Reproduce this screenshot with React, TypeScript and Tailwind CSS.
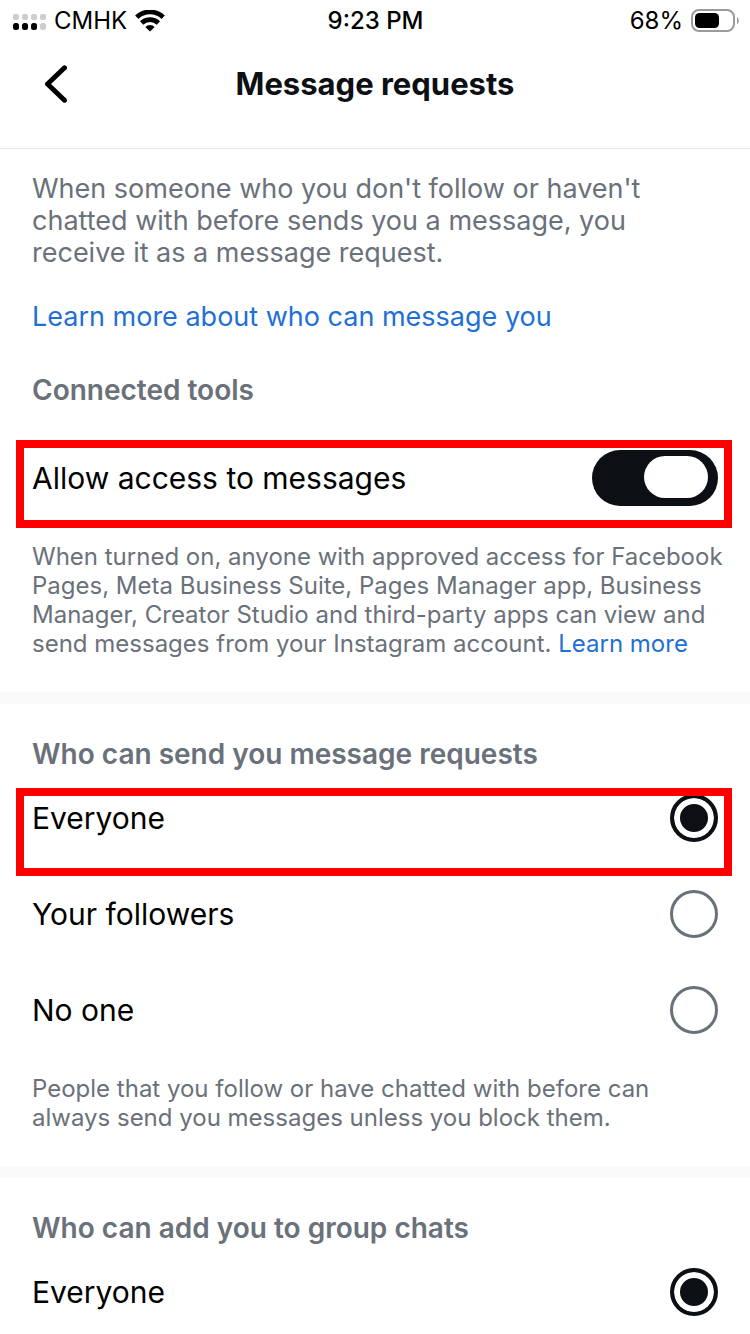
import { useState, type ReactNode } from 'react';

const audienceOptions = ['Everyone', 'Your followers', 'No one'];
const groupOptions = ['Everyone'];

function StatusBar() {
  return (
    <div className="grid grid-cols-3 items-center h-10 pt-px pl-3 pr-[11px] text-2xl text-black shrink-0">
      <div className="flex items-center">
        <svg viewBox="0 0 34 17" className="w-[34px] h-[17px] mt-1 mr-2" aria-hidden="true">
          {[0, 1, 2, 3].map((i) => (
            <g key={i}>
              <rect x={1 + i * 9} y="0" width="6" height="6" rx="2" fill="#cdcdcd" />
              <rect x={1 + i * 9} y="9" width="6" height="7" rx="2.5" fill={i < 3 ? '#000' : '#cdcdcd'} />
            </g>
          ))}
        </svg>
        <span>CMHK</span>
        <svg viewBox="0 0 30 22" className="w-[30px] h-[22px] ml-2" fill="none" stroke="#000" aria-hidden="true">
          <path d="M1.8 7.3a19 19 0 0 1 26.4 0" strokeWidth="4.8" />
          <path d="M6.6 12.9a12.2 12.2 0 0 1 16.8 0" strokeWidth="4.8" />
          <path d="M15 21.5l-4.7-4.6a6.6 6.600 0 0 1 9.400 0z" fill="#000" stroke="none" />
        </svg>
      </div>
      <span className="text-center font-medium whitespace-nowrap">9:23 PM</span>
      <div className="flex items-center justify-end gap-2">
        <span>68%</span>
        <svg viewBox="0 0 48 24" className="w-12 h-6" aria-hidden="true">
          <rect x="1" y="1" width="42" height="21" rx="7" fill="none" stroke="#9b9b9b" strokeWidth="2" />
          <rect x="4" y="4" width="24" height="15" rx="4.5" fill="#000" />
          <path d="M46 8c2.4 1.2 2.4 6 0 7.2z" fill="#9b9b9b" />
        </svg>
      </div>
    </div>
  );
}

function Header() {
  return (
    <header className="grid grid-cols-[1fr_auto_1fr] items-start h-[109px] px-8 pt-5 border-b border-[#e6e8ec] shrink-0">
      <button aria-label="Back" className="flex items-center justify-center w-12 h-12">
        <svg viewBox="0 0 24 40" className="w-6 h-10" fill="none" stroke="#000" strokeWidth="5" strokeLinecap="round" strokeLinejoin="round">
          <path d="M20.5 3.8L3.5 20l17 16.2" />
        </svg>
      </button>
      <h1 className="text-[31px] leading-[48px] font-bold text-[#0c1014]">Message requests</h1>
    </header>
  );
}

function SectionTitle({ children }: { children: ReactNode }) {
  return <h2 className="px-8 text-[28px] leading-8 font-semibold text-[#6a717a]">{children}</h2>;
}

function Footnote({ children }: { children: ReactNode }) {
  return <p className="pl-8 pr-6 text-[24px] leading-[29px] text-[#6a717a]">{children}</p>;
}

function Divider() {
  return <div className="h-3 bg-[#fafafa]" />;
}

interface RadioListProps {
  name: string;
  options: string[];
  highlighted?: string;
}

function RadioList({ name, options, highlighted }: RadioListProps) {
  const [selected, setSelected] = useState(options[0]);

  return (
    <div>
      {options.map((option) => (
        <label key={option} className="relative flex items-center justify-between h-24 px-8 cursor-pointer">
          <span className="text-[30px] leading-10 text-black">{option}</span>
          <input
            type="radio"
            name={name}
            checked={selected === option}
            onChange={() => setSelected(option)}
            className="appearance-none w-12 h-12 rounded-full border-3 border-[#6a717a] bg-white checked:border-4 checked:border-[#0c1014] checked:bg-[#0c1014] checked:shadow-[inset_0_0_0_6px_#fff]"
          />
          {option === highlighted && (
            <span className="absolute z-10 left-4 right-[18px] top-[18px] h-[88px] border-8 border-[#ff0000] pointer-events-none" />
          )}
        </label>
      ))}
    </div>
  );
}

export default function App() {
  const [allowAccess, setAllowAccess] = useState(true);

  return (
    <div className="flex flex-col h-screen bg-white font-['Inter',sans-serif]">
      <StatusBar />
      <Header />

      <main className="flex-1 overflow-y-auto [scrollbar-width:none]">
        <section className="pt-6 pb-[34px]">
          <p className="px-8 text-[27px] leading-8 text-[#6a717a]">
            When someone who you don't follow or haven't chatted with before sends you a message, you receive it as a message request.
          </p>
          <a href="#" className="block mt-8 px-8 text-[27px] leading-8 text-[#1f6fd6]">
            Learn more about who can message you
          </a>

          <div className="mt-[41px]">
            <SectionTitle>Connected tools</SectionTitle>
          </div>
          <label className="relative flex items-center justify-between h-24 mt-6 px-8 cursor-pointer">
            <span className="text-[30px] leading-10 text-black">Allow access to messages</span>
            <span className="relative flex">
              <input
                type="checkbox"
                role="switch"
                checked={allowAccess}
                onChange={(e) => setAllowAccess(e.target.checked)}
                className="peer appearance-none w-[126px] h-14 rounded-full bg-[#c7ccd1] checked:bg-[#0c1014]"
              />
              <span className="absolute top-[6px] left-[10px] peer-checked:left-[52px] w-16 h-[42px] rounded-full bg-white pointer-events-none" />
            </span>
            <span className="absolute z-10 left-4 right-[18px] top-[10px] h-[88px] border-8 border-[#ff0000] pointer-events-none" />
          </label>
          <div className="mt-4">
            <Footnote>
              When turned on, anyone with approved access for Facebook Pages, Meta Business Suite, Pages Manager app, Business Manager, Creator Studio and third-party apps can view and send messages from your Instagram account.{' '}
              <a href="#" className="text-[#1f6fd6]">Learn more</a>
            </Footnote>
          </div>
        </section>

        <Divider />

        <section className="pt-[34px] pb-[34px]">
          <SectionTitle>Who can send you message requests</SectionTitle>
          <RadioList name="requests" options={audienceOptions} highlighted="Everyone" />
          <div className="mt-4">
            <Footnote>
              People that you follow or have chatted with before can always send you messages unless you block them.
            </Footnote>
          </div>
        </section>

        <Divider />

        <section className="pt-[34px]">
          <SectionTitle>Who can add you to group chats</SectionTitle>
          <RadioList name="groups" options={groupOptions} />
        </section>
      </main>
    </div>
  );
}
